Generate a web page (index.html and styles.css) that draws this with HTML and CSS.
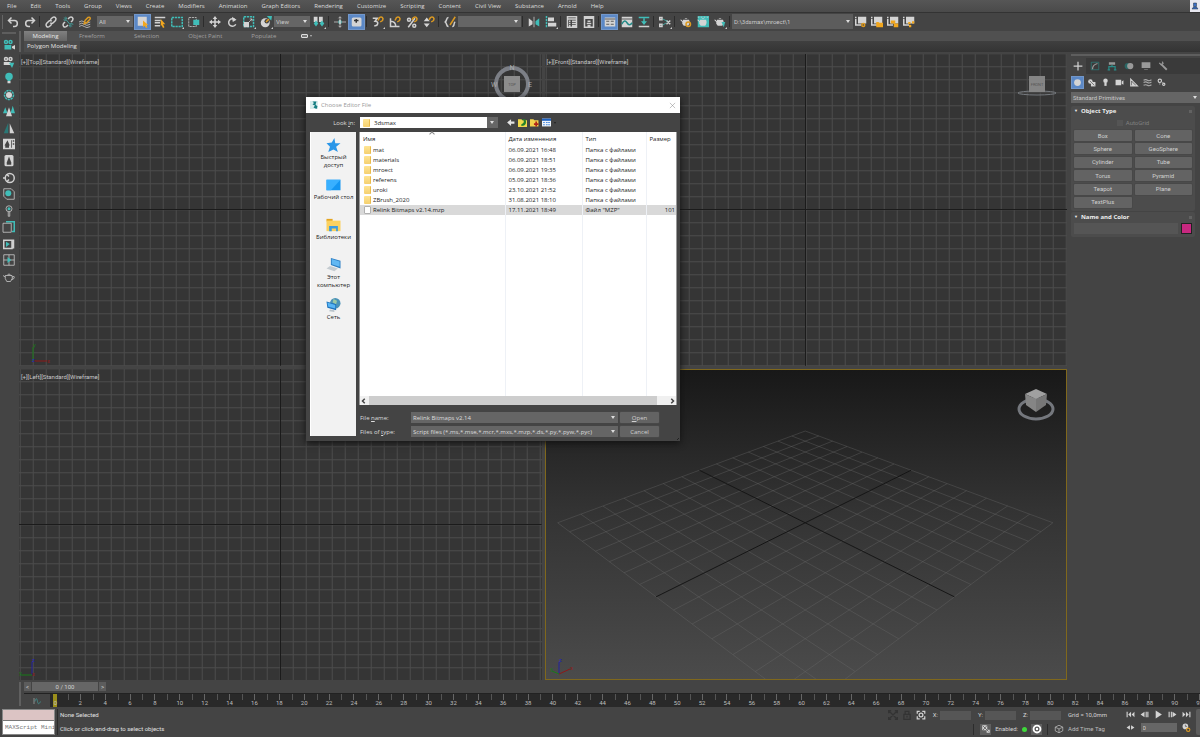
FILE: index.html
```html
<!DOCTYPE html>
<html lang="en">
<head>
<meta charset="utf-8">
<title>3ds Max</title>
<link rel="stylesheet" href="styles.css">
</head>
<body>
<div class="app">
<nav class="menubar">
  <button>File</button><button>Edit</button><button>Tools</button><button>Group</button><button>Views</button><button>Create</button><button>Modifiers</button><button>Animation</button><button>Graph Editors</button><button>Rendering</button><button>Customize</button><button>Scripting</button><button>Content</button><button>Civil View</button><button>Substance</button><button>Arnold</button><button>Help</button>
  <span class="user"><svg viewBox="0 0 16 16"><path class="b" stroke="#234" d="M5 2h6v7H5zM2 14l3-4h6l3 4z"/></svg></span>
</nav>

<div class="toolbar">
  <i class="sep grip"></i>
  <button class="tb" aria-label="Undo"><svg viewBox="0 0 16 16"><path class="s w2" d="M6 2 2 6l4 4M2 6h8c5 0 5 8 0 8H8"/></svg></button>
  <button class="tb" aria-label="Redo"><svg viewBox="0 0 16 16"><path class="s w2" d="m10 2 4 4-4 4M14 6H6c-5 0-5 8 0 8h2"/></svg></button>
  <i class="sep"></i>
  <button class="tb" aria-label="Link"><svg viewBox="0 0 16 16"><path class="s w2" d="m7 5 3-3c3-2 6 1 4 4l-3 3c-1 1-3 1-4 0M9 11l-3 3c-3 2-6-1-4-4l3-3c1-1 3-1 4 0"/></svg></button>
  <button class="tb" aria-label="Unlink"><svg viewBox="0 0 16 16"><path class="s w2" d="m8 4 2-2c3-2 6 1 4 4l-2 2M8 12l-2 2c-3 2-6-1-4-4l2-2"/><path class="st w1" d="m3 2 10 12M2 5l3 1M11 10l4 1M5 1l1 3M10 12l1 3"/></svg></button>
  <button class="tb" aria-label="Bind to space warp"><svg viewBox="0 0 16 16"><path class="s w1" d="M0 8q4-3 7 0t8 0M0 11q4-3 7 0t8 0M0 14q4-3 7 0t8 0"/><path class="so w2" d="m8 6 4-4c3-1 4 1 2 3l-4 4-3 1 1-4"/></svg></button>
  <label class="combo c-all"><select aria-label="Selection filter"><option>All</option></select></label>
  <button class="tb on" aria-label="Select object"><svg viewBox="0 0 16 16"><path class="f" d="M1 1h12v12H1z"/><path class="o" d="m8 6 7 6-3 0 2 3-2 1-2-3-2 2z"/></svg></button>
  <button class="tb" aria-label="Select by name"><svg viewBox="0 0 16 16"><path class="s w2" d="M1 2h14M1 6h8M1 9h7M1 13h7"/><path class="o" d="m9 4 6 7h-3l2 4-2 1-2-4-1 2z"/></svg></button>
  <button class="tb fly" aria-label="Region"><svg viewBox="0 0 16 16"><path class="st w2 dash" d="M1 2h14v12H1z"/></svg></button>
  <button class="tb" aria-label="Window crossing"><svg viewBox="0 0 16 16"><path class="s w1 dash" d="M1 2h10v12H1z"/><path class="t" d="M7 5h8v7H7z"/></svg></button>
  <i class="sep"></i>
  <button class="tb" aria-label="Move"><svg viewBox="0 0 16 16"><path class="f" d="M8 0l3 4H9v3h3V5l4 3-4 3V9H9v3h2l-3 4-3-4h2V9H4v2L0 8l4-3v2h3V4H5z"/></svg></button>
  <button class="tb" aria-label="Rotate"><svg viewBox="0 0 16 16"><path class="s w2" d="M12 5a5 5 0 1 0 1 6"/><path class="f" d="M8 1l6 4-5 3z"/></svg></button>
  <button class="tb fly" aria-label="Scale"><svg viewBox="0 0 16 16"><path class="st w2 dash" d="M1 1h13v13H1z"/><path class="f" d="M1 8h7v7H1z"/><path class="s w1" d="m8 8 4-4M9 4h3v3"/></svg></button>
  <button class="tb fly" aria-label="Place"><svg viewBox="0 0 16 16"><circle class="f" cx="7" cy="9" r="6"/><circle class="d" cx="9" cy="7" r="3"/><path class="so w2" d="m8 8 4-4"/><path class="t" d="m9 0 7 0-1 6z"/></svg></button>
  <label class="combo c-view"><select aria-label="Coordinate system"><option>View</option></select></label>
  <button class="tb fly" aria-label="Pivot"><svg viewBox="0 0 16 16"><path class="f" d="M1 1h5v7H1zM8 1h5v7H8z"/><path class="t" d="M1 10l3-4 3 4-3 4zM9 10l3-4 3 4-3 4z"/></svg></button>
  <i class="sep"></i>
  <button class="tb" aria-label="Manipulate"><svg viewBox="0 0 16 16"><path class="s w1" d="M8 1v14M0 8h16M6 3l2-2 2 2M6 13l2 2 2-2"/><path class="t" d="M6 6h4v4H6z"/><path class="f" d="M7 5h2v6H7z"/></svg></button>
  <button class="tb on" aria-label="Keyboard override"><svg viewBox="0 0 16 16"><rect class="f" x="1" y="2" width="13" height="12" rx="2"/><path class="sd w2" d="M7 4v5M4 6h6"/></svg></button>
  <i class="sep"></i>
  <button class="tb fly" aria-label="Snaps"><svg viewBox="0 0 16 16"><path class="s w2" d="M1 3h6L4 7c6 0 4 7-1 6"/><path class="so w2" d="m8 6 2-4c3-2 6 1 4 4l-3 2"/></svg></button>
  <button class="tb" aria-label="Angle snap"><svg viewBox="0 0 16 16"><path class="s w2" d="M2 3v11h12M2 7c5 0 7 3 7 7"/><path class="so w2" d="m8 6 2-4c3-2 6 1 4 4l-3 2"/></svg></button>
  <button class="tb" aria-label="Percent snap"><svg viewBox="0 0 16 16"><path class="s w2" d="M12 3 3 15"/><circle class="s w2" cx="4" cy="5" r="2"/><circle class="s w2" cx="11" cy="13" r="2"/><path class="so w2" d="m8 5 2-3c3-2 6 1 4 4l-3 2"/></svg></button>
  <button class="tb" aria-label="Spinner snap"><svg viewBox="0 0 16 16"><path class="f" d="m5 2 4 5H1zM5 15l4-5H1z"/><path class="so w2" d="m8 5 2-3c3-2 6 1 4 4l-3 2"/></svg></button>
  <i class="sep"></i>
  <button class="tb" aria-label="Edit selection sets"><svg viewBox="0 0 16 16"><path class="s w2" d="M6 2C2 2 5 7 1 8c4 1 1 6 5 6M11 14c4 0 1-5 4-6"/><path class="so w2" d="M15 1 8 12"/></svg></button>
  <label class="combo c-set"><select aria-label="Named selection sets"><option></option></select></label>
  <i class="sep"></i>
  <button class="tb" aria-label="Mirror"><svg viewBox="0 0 16 16"><path class="f" d="m1 3 5 4v4l-5 3z"/><path class="t" d="m15 3-5 4v4l5 3z"/><path class="s w1" d="M8 1v14"/></svg></button>
  <button class="tb fly" aria-label="Align"><svg viewBox="0 0 16 16"><path class="st w2 dash" d="M2 0v16"/><path class="f" d="M4 2h8v5H4zM4 9h11v5H4z"/></svg></button>
  <i class="sep"></i>
  <button class="tb" aria-label="Layer explorer"><svg viewBox="0 0 16 16"><path class="s w2" d="M2 1h12v14H2zM2 4h12M4 7h2M8 7h5M4 10h2M8 10h5M4 13h2M8 13h5"/></svg></button>
  <button class="tb" aria-label="Scene explorer"><svg viewBox="0 0 16 16"><path class="s w2" d="M2 1h12v14H2zM2 3h12M6 7h4M5 10h6M6 13h4"/></svg></button>
  <i class="sep"></i>
  <button class="tb on" aria-label="Ribbon"><svg viewBox="0 0 16 16"><path class="f" d="M1 2h14v12H1z"/><path class="sd w1" d="M1 4h14M3 7h4M9 7h4M3 11h4M9 11h4"/></svg></button>
  <button class="tb" aria-label="Curve editor"><svg viewBox="0 0 16 16"><path class="f" d="M1 1h14v14H1z"/><path class="sd w1" d="M1 4h14"/><path class="stt w2" d="M1 11c3-6 5-5 7-2s4 4 7 0"/></svg></button>
  <button class="tb" aria-label="Dope sheet"><svg viewBox="0 0 16 16"><path class="st w2" d="M1 2h14"/><path class="s w2" d="M1 14h14"/><path class="t" d="M7 3h2v4h3l-4 5-4-5h3z"/></svg></button>
  <i class="sep"></i>
  <button class="tb fly" aria-label="Schematic"><svg viewBox="0 0 16 16"><path class="s w2" d="M1 2h3v3H1zM1 11h3v3H1zM10 6l5 5M15 6l-5 5"/><path class="st w1" d="M5 4l6 3M5 12l5-3"/></svg></button>
  <i class="sep"></i>
  <button class="tb" aria-label="Render setup"><svg viewBox="0 0 16 16"><use href="#teapot"/><circle cx="11" cy="11" r="3" class="so w2"/></svg></button>
  <button class="tb" aria-label="Frame window"><svg viewBox="0 0 16 16"><path class="t" d="M1 0h15v15H1z"/><path class="f" d="M1 1h2v1H1zM5 1h2v1H5zM9 1h2v1H9zM13 1h2v1h-2z"/><use href="#teapot"/></svg></button>
  <button class="tb fly" aria-label="Render"><svg viewBox="0 0 16 16"><use href="#teapot"/><path class="t" d="M10 8h5l-2 7z"/></svg></button>
  <i class="sep"></i>
  <label class="combo c-path"><select aria-label="Project folder"><option>D:\3dsmax\mroect\1</option></select></label>
  <button class="tb" aria-label="Project settings"><svg viewBox="0 0 16 16"><use href="#proj"/><circle class="so w2" cx="11" cy="12" r="2"/></svg></button>
  <button class="tb" aria-label="Project open"><svg viewBox="0 0 16 16"><use href="#proj"/><path class="o" d="M7 8h3l1 1h5v6H7z"/></svg></button>
  <button class="tb" aria-label="Project tree"><svg viewBox="0 0 16 16"><use href="#proj"/><path class="o" d="M5 6h6v4H5zM9 10h6v5H9z"/></svg></button>
  <button class="tb" aria-label="Project links"><svg viewBox="0 0 16 16"><use href="#proj"/><path class="o" d="M7 8h3v3H7zM12 7h3v3h-3zM8 12h3v3H8z"/></svg></button>
</div>

<div class="body">
  <aside class="leftbar">
    <i class="hgrip"></i>
    <div class="lefticons">
      <svg viewBox="0 0 16 16"><circle class="st w2" cx="4" cy="4" r="2"/><circle class="st w2" cx="10" cy="4" r="2"/><path class="t" d="M2 8h9v6H2z"/><path class="f" d="m12 10 4-2v6l-4-2z"/></svg>
      <svg viewBox="0 0 16 16"><circle class="s w2" cx="4" cy="4" r="2"/><circle class="s w2" cx="10" cy="4" r="2"/><path class="f" d="M1 8h9v4H1z"/><path class="t" d="M8 9h7l-3 7z"/></svg>
      <svg viewBox="0 0 16 16"><circle class="t" cx="8" cy="6" r="5"/><path class="t" d="M6 9h4v3H6z"/><path class="f" d="M6 12h4v3H6z"/></svg>
      <svg viewBox="0 0 16 16"><circle class="st w2 dash" cx="8" cy="8" r="6"/><circle class="f" cx="8" cy="8" r="4"/></svg>
      <svg viewBox="0 0 16 16"><path class="t" d="m3 3 3 8H0zM13 1l3 10h-6z"/><path class="f" d="m8 3 4 12H4z"/></svg>
      <svg viewBox="0 0 16 16"><path fill="#2a7775" d="M7 1v14H1z"/><path class="f" d="M9 2v13h6z"/></svg>
      <svg viewBox="0 0 16 16"><path class="f" d="M0 1h16v14H0z"/><path class="d" d="m6 3 3 7H8v3H3v-3H2zM11 3h1v10h-1zM13 3h2v2h-2zM13 7h2v2h-2z"/></svg>
      <svg viewBox="0 0 16 16"><rect class="f" x="2" y="0" width="12" height="15" rx="2"/><path class="d" d="m8 2 3 8v3H5v-3z"/></svg>
      <svg viewBox="0 0 16 16"><circle class="s w2" cx="9" cy="8" r="6"/><path class="s w2" d="M0 8h4M5 3l3 3M5 13l3-3"/></svg>
      <svg viewBox="0 0 16 16"><path class="s w1" d="M1 1h10l4 4v10H5l-4-4z"/><circle class="t" cx="7" cy="7" r="4"/></svg>
      <svg viewBox="0 0 16 16"><circle class="s w1" cx="8" cy="5" r="4"/><circle class="t" cx="8" cy="5" r="2"/><path class="s w1" d="M7 9v6h2V9"/></svg>
      <svg viewBox="0 0 16 16"><path class="st w2" d="M4 1h11v13h-3"/><path class="s w1" d="M0 3h11v12H0z"/></svg>
      <svg viewBox="0 0 16 16"><path class="s w2" d="M1 3h11v11H1zM14 2v12"/><path class="t" d="m4 5 5 3-5 4z"/></svg>
      <svg viewBox="0 0 16 16"><path class="s w1" d="M1 1h14v14H1zM1 8h14M8 1v14"/><path class="t" d="m6 4 5 4-5 4z"/></svg>
      <svg viewBox="0 0 16 16"><path class="s w1" d="M3 6h9q2 4-2 8H5Q2 10 3 6zM6 5q2-2 4 0M3 8 0 6M12 8q4-2 3 1t-4 2"/></svg>
    </div>
  </aside>

  <div class="work">
    <div class="ribbon">
      <i class="vgrip"></i>
      <div class="ribboncol">
        <div class="tabs">
          <button class="tab sel">Modeling</button><button class="tab">Freeform</button><button class="tab">Selection</button><button class="tab">Object Paint</button><button class="tab">Populate</button><button class="tabmenu" aria-label="Ribbon options"><i></i></button>
        </div>
        <div class="poly"><span>Polygon Modeling</span></div>
      </div>
    </div>

    <div class="stage">
      <div class="views">
        <section class="vp grid">
          <span class="vlabel">[+][Top][Standard][Wireframe]</span>
          <svg class="cube ctop" viewBox="0 0 44 44"><circle cx="22" cy="22" r="16" fill="none" stroke="#7c7f86" stroke-width="4"/><path fill="#8c8c8c" d="M14 14h16v16H14z"/><text x="22" y="24" class="face">TOP</text><text x="22" y="8" class="dir">N</text><text x="4" y="25" class="dir">W</text><text x="40" y="25" class="dir">E</text></svg>
          <svg class="axis" viewBox="0 0 36 30"><path d="M14 20V6" stroke="#197a19"/><path d="M15 20h13" stroke="#8e1818"/><text x="14" y="6" fill="#197a19">y</text><text x="28" y="22" fill="#8e1818">x</text><text x="13" y="21" fill="#2222c0">z</text></svg>
        </section>
        <section class="vp grid">
          <span class="vlabel">[+][Front][Standard][Wireframe]</span>
          <svg class="cube" viewBox="0 0 44 44"><ellipse cx="22" cy="31" rx="19" ry="2" fill="none" stroke="#777b80"/><path fill="#858585" d="M14 14h16v16H14z"/><text x="22" y="24" class="face">FRONT</text></svg>
        </section>
        <section class="vp grid">
          <span class="vlabel">[+][Left][Standard][Wireframe]</span>
          <svg class="axis" viewBox="0 0 36 30"><path d="M13 20V7" stroke="#2222a0"/><path d="M13 20H2" stroke="#197a19"/><text x="13" y="7" fill="#2222c0">z</text><text x="0" y="20" fill="#197a19">y</text><text x="13" y="21" fill="#8e1818">x</text></svg>
        </section>
        <section class="vp persp">
          <svg class="ground" viewBox="0 0 522 310" preserveAspectRatio="xMidYMid slice"><path id="gridlines" fill="none" stroke="#6c6c6c" stroke-opacity="0.36"/><path id="gridaxes" fill="none" stroke="#161616"/></svg>
          <svg class="cube" viewBox="0 0 44 44"><ellipse cx="22" cy="31" rx="17" ry="10" fill="none" stroke="#74777d" stroke-width="3"/><path fill="#a0a0a0" d="m22 11 11 5-11 5-11-5z"/><path fill="#858585" d="M11 16l11 5v13l-10-7z"/><path fill="#777" d="m33 16-11 5v13l10-7z"/></svg>
          <svg class="axis" viewBox="0 0 36 30"><path d="M13 20V8" stroke="#2222a0"/><path d="m13 20-7-3" stroke="#197a19"/><path d="m13 20 11-5" stroke="#8e1818"/><text x="13" y="8" fill="#2222c0">z</text><text x="4" y="17" fill="#197a19">y</text><text x="24" y="16" fill="#8e1818">x</text></svg>
        </section>
      </div>

      <aside class="panel">
        <i class="hgrip"></i>
        <div class="ptabs">
          <button class="on" aria-label="Create"><svg viewBox="0 0 16 16"><path class="s w2" d="M8 1v14M1 8h14"/></svg></button>
          <button aria-label="Modify"><svg viewBox="0 0 16 16"><path stroke="#2a8a87" fill="none" d="M2 2h12v12H2z"/><path stroke="#999" stroke-width="2" fill="none" d="M4 13q0-7 8-9"/></svg></button>
          <button aria-label="Hierarchy"><svg viewBox="0 0 16 16"><path fill="#999" d="M3 2h10v4H3z"/><path stroke="#2a8a87" stroke-width="2" fill="none" d="M8 6v3M3 15V9h10v6M1 14h4M11 14h4"/></svg></button>
          <button aria-label="Motion"><svg viewBox="0 0 16 16"><circle cx="6" cy="8" r="5" fill="#2a6664"/><circle cx="10" cy="8" r="5" fill="#999"/></svg></button>
          <button aria-label="Display"><svg viewBox="0 0 16 16"><path fill="#999" d="M1 2h14v9H1zM5 13h6v1H5z"/></svg></button>
          <button aria-label="Utilities"><svg viewBox="0 0 16 16"><path stroke="#999" stroke-width="3" d="m5 5 9 9"/><path stroke="#999" stroke-width="2" fill="none" d="M2 3l3 3 3-2-1-3"/></svg></button>
        </div>
        <div class="cats">
          <button class="on" aria-label="Geometry"><svg viewBox="0 0 16 16"><circle class="f" cx="8" cy="8" r="6"/></svg></button>
          <button aria-label="Shapes"><svg viewBox="0 0 16 16"><circle class="f" cx="6" cy="6" r="4"/><path class="f" d="M7 7h8v8H7z"/><path class="sd w1" d="m5 5 8 8"/></svg></button>
          <button aria-label="Lights"><svg viewBox="0 0 16 16"><circle class="f" cx="8" cy="5" r="4"/><path class="f" d="M6 8h4v6H6z"/></svg></button>
          <button aria-label="Cameras"><svg viewBox="0 0 16 16"><path class="f" d="M1 3h10v10H1zM12 6l3-2v8l-3-2z"/></svg></button>
          <button aria-label="Helpers"><svg viewBox="0 0 16 16"><path class="s w2" d="M3 2v12h12zM6 9v3h3z"/></svg></button>
          <button aria-label="Space warps"><svg viewBox="0 0 16 16"><path fill="none" stroke="#aaa" stroke-width="2" d="M1 4q4-2 7 0t7-1M1 8q4-2 7 0t7-1M1 13q4-2 7 0t7-1"/></svg></button>
          <button aria-label="Systems"><svg viewBox="0 0 16 16"><circle class="s w2" cx="5" cy="5" r="3"/><circle class="s w2" cx="12" cy="11" r="2"/><path class="s w1" d="M5 8v4M8 6l3 3"/></svg></button>
        </div>
        <label class="combo c-prim"><select aria-label="Primitive category"><option>Standard Primitives</option></select></label>
        <section class="roll">
          <h3><span>▼</span>Object Type<i></i></h3>
          <label class="auto"><input type="checkbox" disabled>AutoGrid</label>
          <div class="prims">
            <button>Box</button><button>Cone</button><button>Sphere</button><button>GeoSphere</button><button>Cylinder</button><button>Tube</button><button>Torus</button><button>Pyramid</button><button>Teapot</button><button>Plane</button><button>TextPlus</button>
          </div>
        </section>
        <section class="roll">
          <h3><span>▼</span>Name and Color<i></i></h3>
          <div class="namerow"><input type="text" aria-label="Object name"><button aria-label="Object color"></button></div>
        </section>
      </aside>
    </div>
  </div>
</div>

<footer class="bottom">
  <div class="timearea">
    <i class="vgrip"></i>
    <div class="timecol">
      <div class="slider"><button aria-label="Previous frame">&lt;</button><button class="thumb">0 / 100</button><button aria-label="Next frame">&gt;</button></div>
      <div class="track"><button class="mini" aria-label="Mini curve editor"><svg viewBox="0 0 16 16"><path class="s w1" d="M2 2v12"/><path class="st w1" d="M4 9c2-9 4-6 5 0s3 6 6 0"/></svg></button><div class="ruler"><div class="frames" id="frames"></div></div></div>
    </div>
  </div>
  <div class="status">
    <div class="script"><i></i><input type="text" value="MAXScript Mini" aria-label="MAXScript Mini Listener"></div>
    <div class="prompt"><p>None Selected</p><p>Click or click-and-drag to select objects</p></div>
    <div class="coords">
      <div class="crow">
        <svg class="dim" viewBox="0 0 16 16"><path class="sd w2" d="M2 2l12 12M14 2 2 14M1 5V1h4M11 1h4v4M1 11v4h4M11 15h4v-4"/></svg>
        <svg class="dim" viewBox="0 0 16 16"><path class="sd w2" d="M3 7h10v8H3zM5 7V2h6v5M8 9v3"/></svg>
        <svg viewBox="0 0 16 16"><path class="s w2" d="M2 6V2h4M10 2h4v4M2 10v4h4M10 14h4v-4"/><circle class="s w2" cx="8" cy="8" r="3"/></svg>
        <label>X:<input type="text"></label><label>Y:<input type="text"></label><label>Z:<input type="text"></label>
        <span class="gridtxt">Grid = 10,0mm</span>
      </div>
      <div class="crow">
        <i class="sep"></i>
        <button class="lit" aria-label="Isolate"><svg viewBox="0 0 16 16"><path class="f" d="M2 2h8v8H2zM9 9h5v5H9z"/><path class="sd w1" d="m3 3 9 9M10 2 3 10"/></svg></button>
        <span>Enabled:</span><i class="led"></i>
        <button class="lit" aria-label="Adaptive"><svg viewBox="0 0 16 16"><circle fill="#fff" cx="8" cy="8" r="7"/><circle fill="none" stroke="#555" stroke-width="2" cx="8" cy="8" r="3"/></svg></button>
        <i class="sep"></i>
        <svg viewBox="0 0 16 16"><path class="s w1" d="m8 2 6 3v6l-6 3-6-3V5zM2 5l6 3 6-3M8 8v6"/></svg>
        <button class="gridtxt tag">Add Time Tag</button>
      </div>
    </div>
    <div class="play">
      <div class="prow">
        <button aria-label="Start"><svg viewBox="0 0 16 16"><path class="f" d="M1 3h2v10H1zM9 3v10L4 8zM15 3v10l-5-5z"/></svg></button>
        <button aria-label="Previous"><svg viewBox="0 0 16 16"><path class="f" d="M8 3v10L1 8zM10 3h2v10h-2zM13 3h2v10h-2z"/></svg></button>
        <button aria-label="Play"><svg viewBox="0 0 16 16"><path class="f" d="m3 1 11 7-11 7z"/></svg></button>
        <button aria-label="Next"><svg viewBox="0 0 16 16"><path class="f" d="M8 3v10l7-5zM1 3h2v10H1zM5 3h2v10H5z"/></svg></button>
        <button aria-label="End"><svg viewBox="0 0 16 16"><path class="f" d="M13 3h2v10h-2zM7 3v10l5-5zM1 3v10l5-5z"/></svg></button>
      </div>
      <div class="prow">
        <button aria-label="Key mode"><svg viewBox="0 0 16 16"><path class="f" d="M7 4v8L1 8zM9 4v8l6-4z"/></svg></button>
        <input type="text" value="0" aria-label="Current frame">
        <button aria-label="Time configuration"><svg viewBox="0 0 16 16"><circle class="f" cx="6" cy="6" r="5"/><path class="sd w1" d="M6 3v3h3"/><circle class="so w2" cx="11" cy="12" r="3"/></svg></button>
      </div>
    </div>
    <i class="edge"></i>
  </div>
</footer>

<div class="dialog" role="dialog" aria-label="Choose Editor File">
  <header><svg viewBox="0 0 16 16"><path fill="#d9eeee" d="M0 0h16v16H0z"/><path fill="#167f83" d="M5 1h8l-2 6 4 4-2 5-6-3 3-4-5-2 3-3z"/></svg><span>Choose Editor File</span><button aria-label="Close"><svg viewBox="0 0 16 16"><path d="m2 2 12 12M14 2 2 14" stroke="#777"/></svg></button></header>
  <div class="look">
    <label for="lookin">Look <u>i</u>n:</label>
    <div class="lookbox"><i class="folder"></i><select id="lookin"><option>3dsmax</option></select></div>
    <button aria-label="Back"><svg viewBox="0 0 16 16"><path fill="#e4e4e4" d="M9 2v4h6v4H9v4L2 8z"/></svg></button>
    <button aria-label="Up"><svg viewBox="0 0 16 16"><path fill="#f1d94c" d="M0 2h6l2 2h8v12H0z"/><path fill="#24812b" d="M8 2h5c3 6 1 12-7 12v-3c4-1 5-4 4-7H8z"/></svg></button>
    <button aria-label="New folder"><svg viewBox="0 0 16 16"><path fill="#f3d24d" d="M0 2h6l2 2h7v11H0z"/><path stroke="#b02418" stroke-width="3" d="M11 6v9M7 11h8"/></svg></button>
    <button aria-label="View"><svg viewBox="0 0 16 16"><path fill="#eef4fb" d="M0 1h16v14H0z"/><path fill="#1e62c0" d="M0 1h16v4H0z"/><path fill="#4a8be0" d="M2 7h3v2H2zM7 7h3v2H7zM11 7h3v2h-3zM2 11h3v2H2zM7 11h3v2H7zM11 11h3v2h-3z"/></svg></button>
    <i class="tiny"></i>
  </div>
  <div class="mid">
    <nav class="places">
      <button><svg viewBox="0 0 16 16"><path fill="#2a96e8" d="m9 0 1 6 6 0-5 4 2 6-5-3-6 3 2-6-4-4 6-1z"/></svg>Быстрый доступ</button>
      <button><svg viewBox="0 0 16 16"><path fill="#1496f2" d="M0 2h16v12H0z"/><path fill="#39b0ff" d="M0 2h16L5 14H0z"/></svg>Рабочий стол</button>
      <button><svg viewBox="0 0 16 16"><path fill="#e5a520" d="M0 1h7v3H0z"/><path fill="#fbd15f" d="M0 3h16v12H0z"/><path fill="#3b9be0" d="M3 9h10v6h-2v-3H6v3H3z"/></svg>Библиотеки</button>
      <button><svg viewBox="0 0 16 16"><path fill="#2d7fc4" d="m5 0 11 3v9L5 8z"/><path fill="#62b8f3" d="m6 1 9 3v6L6 7z"/><path fill="#c5ccd1" d="m4 9 9 3-4 3-9-3z"/></svg>Этот компьютер</button>
      <button><svg viewBox="0 0 16 16"><circle cx="10" cy="6" r="6" fill="#4b93b8"/><path fill="#9bc9a6" d="M8 1l4 2-1 4-4-2z"/><path fill="#1f73bb" d="m0 4 11 3v7L1 11z"/><path fill="#58b5f5" d="m1 5 9 3v4l-8-2z"/><path fill="#b9c3ca" d="M4 13l5 1v2l-6-1z"/></svg>Сеть</button>
    </nav>
    <div class="files">
      <div class="filebody">
      <i class="sortmark"></i>
      <table>
        <colgroup><col class="k1"><col class="k2"><col class="k3"><col></colgroup>
        <thead><tr><th>Имя</th><th>Дата изменения</th><th>Тип</th><th>Размер</th></tr></thead>
        <tbody>
          <tr><td><i class="folder"></i>mat</td><td>06.09.2021 16:48</td><td>Папка с файлами</td><td></td></tr>
          <tr><td><i class="folder"></i>materials</td><td>06.09.2021 18:51</td><td>Папка с файлами</td><td></td></tr>
          <tr><td><i class="folder"></i>mroect</td><td>06.09.2021 19:35</td><td>Папка с файлами</td><td></td></tr>
          <tr><td><i class="folder"></i>referens</td><td>05.09.2021 18:36</td><td>Папка с файлами</td><td></td></tr>
          <tr><td><i class="folder"></i>uroki</td><td>23.10.2021 21:52</td><td>Папка с файлами</td><td></td></tr>
          <tr><td><i class="folder"></i>ZBrush_2020</td><td>31.08.2021 18:10</td><td>Папка с файлами</td><td></td></tr>
          <tr class="picked"><td><i class="page"></i>Relink Bitmaps v2.14.mzp</td><td>17.11.2021 18:49</td><td>Файл "MZP"</td><td>101</td></tr>
          <tr class="fill"><td></td><td></td><td></td><td></td></tr>
        </tbody>
      </table>
      </div>
      <div class="hscroll"><svg viewBox="0 0 8 8"><path d="M5 1 2 4l3 3"/></svg><i></i><svg viewBox="0 0 8 8"><path d="m3 1 3 3-3 3"/></svg></div>
    </div>
    <div class="fields">
      <label for="fname">File <u>n</u>ame:</label><span class="combo"><select id="fname"><option>Relink Bitmaps v2.14</option></select></span><button><u>O</u>pen</button>
      <label for="ftype">Files of <u>t</u>ype:</label><span class="combo"><select id="ftype"><option>Script files (*.ms,*.mse,*.mcr,*.mxs,*.mzp,*.ds,*.py,*.pyw,*.pyc)</option></select></span><button>Cancel</button>
    </div>
  </div>
  <i class="resize"></i>
</div>
</div>

<svg class="defs"><defs>
  <g id="teapot"><path fill="#d4d4d4" d="M4 5h8q2 4-1 8H5Q2 10 3 8L0 5h2l2 2zM6 4q2-2 4 0z"/></g>
  <g id="proj"><path fill="#d4d4d4" d="M0 1h2v2H0zM0 4h2v9H0zM4 1h11v9H4zM0 11h8v2H0z"/></g>
</defs></svg>
<script src="script.js"></script>
</body>
</html>
```
FILE: styles.css
```css
* { box-sizing: border-box; }
html, body { height: 100%; }
body { margin: 0; background: #444; color: #d2d2d2; font: 6px/8px Roboto, "Open Sans", sans-serif; overflow: hidden; }
button, input, select { font: inherit; color: inherit; background: none; border: 0; padding: 0; margin: 0; border-radius: 0; }
button { display: flex; align-items: center; justify-content: center; }
select { appearance: none; width: 100%; height: 100%; padding: 0 2px; outline: 0; }
p, h3 { margin: 0; font-size: inherit; }
svg { display: block; width: 12px; height: 12px; flex: none; overflow: visible; }
.defs { position: absolute; width: 0; height: 0; }

.f { fill: #d4d4d4; } .t { fill: #40bdb8; } .o { fill: #f2a71e; } .d { fill: #444; } .b { fill: #3d6fc4; }
.s, .st, .so, .sd, .stt { fill: none; stroke: #d0d0d0; }
.st { stroke: #40bdb8; } .so { stroke: #dc9a22; } .sd { stroke: #333; } .stt { stroke: #238a87; }
.w1 { stroke-width: 1; } .w2 { stroke-width: 2; }
.dash { stroke-dasharray: 3 1; }

.app { position: relative; height: 100%; display: flex; flex-direction: column; }

.menubar { display: flex; height: 13px; padding-left: 7px; gap: 14px; align-items: center; background: linear-gradient(#565656, #4a4a4a); border-bottom: 1px solid #333; }
.menubar button { color: #dcdcdc; white-space: nowrap; font-family: "Open Sans", sans-serif; }
.user { margin-left: auto; background: #e8e8f0; width: 10px; height: 12px; display: flex; align-items: center; justify-content: center; }
.user svg { width: 8px; height: 10px; }

.toolbar { display: flex; height: 17px; align-items: center; background: #444; }
.tb { width: 17px; height: 16px; flex: none; position: relative; }
.tb svg { width: 12px; height: 12px; }
.tb.on, .cats .on { background: #5b88c6; border: 1px solid #7297ca; }
.fly::after { content: ""; position: absolute; right: 1px; bottom: 1px; border: 1px solid #ccc; border-top-color: transparent; border-left-color: transparent; }
.sep { width: 4px; height: 11px; flex: none; background: linear-gradient(90deg, transparent 1px, #2c2c2c 1px 2px, transparent 2px); }
.grip { background: linear-gradient(90deg, transparent 2px, #666 2px 3px, transparent 3px); height: 14px; }
.combo { position: relative; display: block; height: 11px; background: #656565; color: #c8c8c8; flex: none; }
.combo::after { content: ""; position: absolute; right: 3px; top: 4px; border: 2px solid transparent; border-top: 3px solid #ddd; border-bottom: 0; pointer-events: none; }
.c-all { width: 36px; margin: 0 1px 0 4px; }
.c-view { width: 36px; }
.c-set { width: 63px; }
.c-path { width: 121px; height: 15px; background: #5c5c5c; }
.c-path ~ .tb { width: 16px; }
.c-path::after { top: 6px; }

.body { flex: 1; min-height: 0; display: flex; }
.leftbar { width: 18px; flex: none; display: flex; flex-direction: column; align-items: center; padding-top: 2px; gap: 5px; }
.hgrip { display: block; width: 14px; height: 2px; background: #5e5e5e; }
.vgrip { display: block; width: 2px; flex: none; background: #606060; }
.lefticons { display: flex; flex-direction: column; justify-content: space-between; height: 244px; }

.work { flex: 1; min-width: 0; display: flex; flex-direction: column; }
.ribbon { display: flex; height: 23px; gap: 3px; padding: 1px 0 1px 1px; }
.ribboncol { flex: 1; }
.tabs { display: flex; height: 10px; background: #505050; color: #a0a0a0; font-family: "Open Sans", sans-serif; }
.tab { padding: 0 12px; min-width: 48px; }
.tab + .tab { min-width: 43px; margin-right: 5px; }
.tab.sel { background: linear-gradient(#808080, #666); color: #e8e8e8; width: 43px; min-width: 0; }
.tabmenu { width: 20px; gap: 2px; margin-left: 3px; }
.tabmenu i { width: 7px; height: 4px; background: #777; border: 1px solid #ddd; border-radius: 1px; }
.tabmenu::after { content: ""; border: 1px solid transparent; border-top: 2px solid #bbb; border-bottom: 0; }
.poly { height: 11px; background: linear-gradient(#3f3f3f, #343434); display: flex; font-family: "Open Sans", sans-serif; }
.poly span { background: #4c4c4c; padding: 1px 3px; color: #e2e2e2; }

.stage { flex: 1; min-height: 0; display: flex; gap: 3px; }
.views { flex: 1; min-width: 0; display: grid; grid-template: 1fr 1fr / 1fr 1fr; gap: 3px; padding: 1px 0 2px 1px; }
.vp { position: relative; overflow: hidden; background-color: #353535; }
.grid { background-image: linear-gradient(#1b1b1b, #1b1b1b), linear-gradient(#1b1b1b, #1b1b1b), linear-gradient(transparent 6px, #4b4b4b 6px 7px, transparent 7px), linear-gradient(90deg, transparent 6px, #4b4b4b 6px 7px, transparent 7px); background-size: 100% 1px, 1px 100%, 13px 13px, 13px 13px; background-position: center; background-repeat: no-repeat, no-repeat, repeat, repeat; }
.persp { background: linear-gradient(#181818, #333 45%, #4b4b4b); border: 1px solid #80681c; }
.ground { width: 100%; height: 100%; }
.vlabel { position: absolute; left: 2px; top: 4px; color: #c8c8c8; }
.cube { position: absolute; right: 8px; top: 8px; width: 44px; height: 44px; }
.face { font-size: 4px; text-anchor: middle; fill: #555; }
.dir { font-size: 7px; text-anchor: middle; fill: #aaa; }
.axis { position: absolute; left: 0; bottom: -5px; width: 36px; height: 30px; font-size: 6px; }

.panel { width: 130px; flex: none; display: flex; flex-direction: column; padding-top: 1px; }
.panel > .hgrip { width: auto; margin-left: 1px; }
.ptabs { display: flex; height: 16px; margin-top: 2px; background: #3a3a3a; }
.ptabs button { width: 16px; margin-right: 1px; }
.ptabs button.on { background: #444; }
.ptabs svg { width: 10px; height: 10px; }
.cats { display: flex; margin: 2px 0 3px 1px; height: 13px; gap: 1px; }
.cats button { width: 13px; }
.cats svg { width: 9px; height: 9px; }
.c-prim { margin-left: 1px; }
.roll { margin: 3px 5px 0 1px; background: #4c4c4c; border-radius: 2px; padding: 0 3px 3px; }
.roll + .roll { margin-top: 1px; }
.roll h3 { display: flex; align-items: center; height: 10px; color: #eee; gap: 3px; font-family: "Open Sans", sans-serif; }
.roll h3 span { font-size: 4px; }
.roll h3 i { margin-left: auto; width: 3px; height: 3px; background: #626262; }
.auto { display: flex; justify-content: center; align-items: center; gap: 3px; height: 14px; color: #808080; }
.auto input { appearance: none; width: 6px; height: 6px; background: #555; }
.prims { display: grid; grid-template-columns: 1fr 1fr; gap: 2px 3px; height: 78px; align-content: space-between; }
.prims button, .fields button { height: 11px; background: #636363; border-radius: 1px; color: #d0d0d0; box-shadow: 0 0 0 1px #484848; }
.namerow { display: flex; gap: 3px; margin-top: 1px; }
.namerow input { flex: 1; min-width: 0; height: 11px; background: #555; }
.namerow button { width: 11px; height: 11px; background: #c82880; border: 1px solid #222; }

.timearea { display: flex; gap: 3px; padding-left: 19px; height: 24px; }
.timecol { flex: 1; min-width: 0; }
.slider { display: flex; height: 9px; gap: 1px; }
.slider button { width: 7px; background: #5c5c5c; }
.slider .thumb { width: 66px; background: #666; }
.track { display: flex; height: 14px; margin-top: 2px; border-top: 1px solid #222; }
.mini { width: 26px; }
.mini svg { width: 8px; height: 8px; }
.ruler { flex: 1; min-width: 0; overflow: hidden; background: #292929; }
.frames { display: grid; grid-template-columns: repeat(47, 1fr); height: 13px; margin: 0 -12px 0 -7px; color: #bdbdbd; }
.frames span { text-align: center; padding-top: 5px; height: 13px; background: linear-gradient(#666, #666) 50% 0 / 1px 6px no-repeat, linear-gradient(#555, #555) 0 0 / 1px 6px no-repeat; white-space: nowrap; }
.frames span:first-child { background: linear-gradient(#9b8f1b, #9b8f1b) 50% 0 / 4px 13px no-repeat; }

.status { display: flex; height: 31px; padding: 3px 0 2px 2px; margin-top: 0; }
.script { width: 53px; flex: none; background: #fff; border: 1px solid #888; display: flex; flex-direction: column; margin-right: 2px; }
.script i { height: 11px; background: #dcc4c4; border-bottom: 1px solid #777; }
.script input { width: 100%; flex: 1; padding-left: 2px; color: #777; font-family: "Liberation Mono", monospace; }
.prompt { flex: 1; padding: 2px 2px 0; border-left: 1px solid #2b2b2b; display: flex; flex-direction: column; gap: 6px; color: #e0e0e0; }
.coords { display: flex; flex-direction: column; gap: 2px; padding-right: 9px; }
.crow { display: flex; justify-content: flex-end; align-items: center; gap: 4px; height: 12px; white-space: nowrap; }
.crow svg { width: 10px; height: 10px; }
.crow label { display: flex; align-items: center; gap: 2px; width: 41px; justify-content: flex-end; }
.crow label input, .prow input { width: 31px; height: 9px; background: #565656; }
.gridtxt { width: 49px; margin-left: 3px; }
.tag { justify-content: flex-start; color: #bdbdbd; margin-left: 0; }
.lit { background: #606060; height: 11px; width: 11px; }
.led { width: 5px; height: 5px; border-radius: 50%; background: #3ed83a; }
.play { width: 70px; display: flex; flex-direction: column; gap: 2px; }
.prow { display: flex; height: 11px; justify-content: space-between; align-items: center; padding-right: 5px; }
.prow svg { width: 9px; height: 9px; }
.prow input { width: 36px; background: #666; padding-left: 2px; }
.edge { width: 4px; background: #5c5c5c; border-radius: 2px 0 0 2px; }

.dialog { position: absolute; left: 306px; top: 97px; width: 374px; height: 344px; background: #444; box-shadow: 0 2px 7px #111; font-family: "Open Sans", sans-serif; color: #ddd; display: flex; flex-direction: column; }
.dialog header { display: flex; align-items: center; height: 16px; background: #fff; color: #999; padding: 0 4px; gap: 3px; }
.dialog header svg { width: 8px; height: 8px; }
.dialog header button { margin-left: auto; }
.dialog header button svg { width: 7px; height: 7px; }
.look { display: flex; height: 19px; align-items: center; gap: 3px; }
.look label { width: 49px; text-align: right; margin-right: 2px; }
.look button svg { width: 9px; height: 9px; }
.lookbox { width: 138px; height: 11px; background: #fff; display: flex; align-items: center; position: relative; color: #222; padding-left: 3px; margin-right: 5px; }
.lookbox::before { content: ""; position: absolute; right: 0; top: 0; width: 11px; height: 11px; background: #666; }
.lookbox::after { content: ""; position: absolute; right: 4px; top: 4px; border: 2px solid transparent; border-top: 3px solid #ddd; border-bottom: 0; }
.tiny { border: 1px solid transparent; border-top: 2px solid #222; border-bottom: 0; }
.folder, .page { display: inline-block; flex: none; width: 7px; height: 8px; margin-right: 2px; vertical-align: top; background: linear-gradient(#ffe594, #f5d06e); border-right: 1px solid #e9bb4c; border-radius: 1px; }
.page { background: #fff; border: 1px solid #b0b0b0; }
.mid { flex: 1; min-height: 0; display: grid; grid-template: 1fr 31px / 46px 1fr; column-gap: 3px; padding: 0 3px 5px 4px; }
.places { grid-row: 1 / 3; background: #f2f2f2; color: #222; padding-top: 6px; border-left: 1px solid #fff; }
.places button { width: 100%; height: 40px; flex-direction: column; justify-content: flex-start; gap: 1px; }
.places svg { width: 15px; height: 14px; }
.files { background: #fff; color: #222; display: flex; flex-direction: column; min-height: 0; border: 1px solid #999; border-width: 0 1px; }
.filebody { flex: 1; position: relative; }
.sortmark { position: absolute; left: 70px; top: 0; width: 4px; height: 4px; border: solid #888; border-width: 1px 0 0 1px; transform: rotate(45deg); }
.files table { width: 100%; height: 100%; border-collapse: collapse; table-layout: fixed; }
.k1 { width: 145px; } .k2 { width: 77px; } .k3 { width: 64px; }
.files th, .files td { padding: 1px 0 1px 3px; text-align: left; font-weight: 400; height: 10px; border-right: 1px solid #eef1f6; white-space: nowrap; }
.files td:first-child { padding-left: 4px; }
.files th { height: 13px; }
.files td:last-child, .files th:last-child { border: 0; }
.files td:last-child { text-align: right; padding-right: 1px; }
.files .fill td { height: auto; }
.picked { background: #d9d9d9; }
.hscroll { display: flex; height: 9px; background: #f0f0f0; align-items: center; justify-content: space-between; }
.hscroll svg { width: 8px; height: 6px; fill: none; stroke: #444; stroke-width: 2px; }
.hscroll i { flex: 1; align-self: stretch; background: #cdcdcd; margin: 0 11px 0 1px; }
.fields { display: grid; grid-template-columns: 49px 207px 39px; column-gap: 2px; row-gap: 3px; padding: 7px 0 0 1px; align-content: start; align-items: center; }
.fields label { white-space: nowrap; }
.fields .combo { color: #ddd; }
.fields button { margin-left: 0; }
.fields { justify-content: start; }
.fields button { width: 39px; position: relative; }
.resize { position: absolute; right: 1px; bottom: 1px; width: 5px; height: 5px; background: repeating-linear-gradient(135deg, transparent 0 2px, #222 2px 3px); clip-path: polygon(100% 0, 100% 100%, 0 100%); }
```
FILE: script.js
```javascript
// Ground plane: 14 x 14 cells drawn through a symmetric two-point projection.
function project(u, v) {
  const w = 1 + 0.17 * (u + v);
  return (260 + 124 * (u - v) / w).toFixed(1) + " " + (153 - 61.6 * (u + v) / w).toFixed(1);
}
let lines = "";
for (let i = -7; i <= 7; i++) {
  if (i === 0) continue;
  const k = i / 7;
  lines += "M" + project(k, -1) + "L" + project(k, 1) + "M" + project(-1, k) + "L" + project(1, k);
}
document.getElementById("gridlines").setAttribute("d", lines);
document.getElementById("gridaxes").setAttribute("d",
  "M" + project(0, -1) + "L" + project(0, 1) + "M" + project(-1, 0) + "L" + project(1, 0));

// Timeline frame numbers.
const frames = document.getElementById("frames");
for (let n = 0; n <= 92; n += 2) {
  const label = document.createElement("span");
  label.textContent = n;
  frames.appendChild(label);
}
```
